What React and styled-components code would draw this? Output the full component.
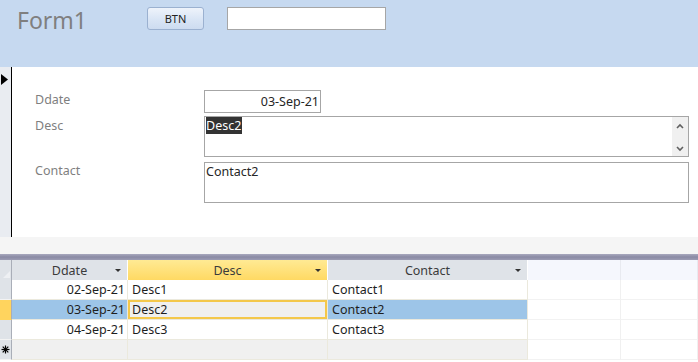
import React from "react";
import styled, { createGlobalStyle } from "styled-components";

const Global = createGlobalStyle`
  html, body { margin: 0; padding: 0; background: #ffffff; }
  body { font-family: "Noto Sans", "Open Sans", sans-serif; overflow: hidden; }
  * { box-sizing: border-box; }
`;

const Page = styled.div`
  width: 698px;
  height: 362px;
  display: flex;
  flex-direction: column;
  overflow: hidden;
`;

const FormHeader = styled.header`
  height: 67px;
  background: #c6d9f0;
  display: flex;
  align-items: flex-start;
  padding: 7px 0 0 17px;
  flex-shrink: 0;
`;

const Title = styled.h1`
  margin: 0;
  width: 130px;
  font-weight: 400;
  font-size: 23px;
  line-height: 27px;
  color: #7f7f7f;
  font-family: "Noto Sans", sans-serif;
`;

const Button = styled.button`
  width: 57px;
  height: 23px;
  border: 1px solid #9bb1d0;
  border-radius: 3px;
  background: linear-gradient(#eef3fb, #d9e5f5 55%, #cddcf0);
  font-family: "Noto Sans", sans-serif;
  font-size: 11px;
  color: #222;
  padding: 0;
  margin-right: 23px;
`;

const HeaderInput = styled.div`
  width: 159px;
  height: 23px;
  background: #fff;
  border: 1px solid #a6a6a6;
`;

const Detail = styled.section`
  height: 170px;
  display: flex;
  flex-shrink: 0;
`;

const FormSelector = styled.div`
  width: 12px;
  background: #e9ecf1;
  border-right: 1px solid #000;
  padding: 1px 0 0 1px;
`;

const FormBody = styled.div`
  flex: 1;
  background: #fff;
  display: grid;
  grid-template-columns: 169px 485px;
  grid-auto-rows: auto;
  row-gap: 3px;
  align-content: start;
  padding: 23px 0 0 23px;
`;

const Label = styled.div`
  font-size: 12.5px;
  line-height: 16px;
  color: #7f7f7f;
  padding-top: ${(p) => p.$top}px;
`;

const Field = styled.div`
  width: ${(p) => p.$w}px;
  height: ${(p) => p.$h}px;
  border: 1px solid #a6a6a6;
  background: #fff;
  font-size: 12.5px;
  line-height: 17px;
  color: #262626;
  padding: 0 1px;
  display: flex;
  justify-content: ${(p) => (p.$right ? "flex-end" : "flex-start")};
  align-items: ${(p) => (p.$right ? "center" : "flex-start")};
  position: relative;
  margin-top: ${(p) => p.$mt || 0}px;
`;

const Selected = styled.span`
  background: #333333;
  color: #fff;
  padding: 0 1px 0 0;
`;

const ScrollBar = styled.div`
  position: absolute;
  right: 0;
  top: 0;
  bottom: 0;
  width: 16px;
  background: #f0f0f0;
  display: flex;
  flex-direction: column;
  justify-content: space-between;
  align-items: center;
  padding: 6px 0 4px;
`;

const FormFooter = styled.div`
  height: 17px;
  background: #f5f5f5;
  flex-shrink: 0;
`;

const Splitter = styled.div`
  height: 6px;
  background: linear-gradient(#a9a9be, #8a8aa4 50%, #9c9cb4);
  flex-shrink: 0;
`;

const Grid = styled.div`
  display: grid;
  grid-template-columns: 12px 116px 200px 200px 93px 77px;
  grid-auto-rows: 20px;
  font-size: 12.5px;
  color: #1e1e1e;
`;

const HeadCell = styled.div`
  background: ${(p) =>
    p.$active
      ? "linear-gradient(#ffea94, #ffd963)"
      : p.$empty
      ? "#f5f7fd"
      : "#dfe3e8"};
  border-right: 1px solid ${(p) => (p.$empty ? "#e8eaf0" : "#ffffff")};
  display: flex;
  align-items: center;
  justify-content: center;
  position: relative;
  color: #3b3b3b;
`;

const Arrow = styled.span`
  position: absolute;
  right: 6px;
  top: 9px;
  width: 0;
  height: 0;
  border-left: 3px solid transparent;
  border-right: 3px solid transparent;
  border-top: 3px solid #333;
`;

const Corner = styled.div`
  background: #dfe3e8;
  border-right: 1px solid #a9aeb8;
  position: relative;
`;

const CornerMark = styled.span`
  position: absolute;
  right: 1px;
  bottom: 2px;
  width: 0;
  height: 0;
  border-left: 7px solid transparent;
  border-bottom: 7px solid #eef0f3;
`;

const RowSel = styled.div`
  background: ${(p) => (p.$current ? "#ffd45e" : "#dfe3e8")};
  border-right: 1px solid #a9aeb8;
  border-bottom: 1px solid ${(p) => (p.$current ? "#ffd45e" : "#f3f3f3")};
  display: flex;
  align-items: center;
  justify-content: center;
`;

const Cell = styled.div`
  background: ${(p) =>
    p.$focus ? "#f0f0f0" : p.$sel ? "#9dc5e8" : p.$new ? "#f0f0f0" : "#ffffff"};
  border-right: 1px solid ${(p) => (p.$empty ? "#f0f0f0" : "#ebe9dd")};
  border-bottom: 1px solid ${(p) => (p.$empty ? "#f2f2f2" : "#ebe9dd")};
  ${(p) => (p.$focus ? "box-shadow: inset 0 0 0 2px #f4c84b;" : "")}
  display: flex;
  align-items: center;
  justify-content: ${(p) => (p.$right ? "flex-end" : "flex-start")};
  padding: 0 ${(p) => (p.$right ? 2 : 4)}px;
  white-space: nowrap;
  overflow: hidden;
`;

const rows = [
  { d: "02-Sep-21", desc: "Desc1", c: "Contact1" },
  { d: "03-Sep-21", desc: "Desc2", c: "Contact2", current: true },
  { d: "04-Sep-21", desc: "Desc3", c: "Contact3" },
];

const Chevron = ({ up }) => (
  <svg width="8" height="6" viewBox="0 0 8 6">
    <path
      d={up ? "M1 5 L4 2 L7 5" : "M1 1 L4 4 L7 1"}
      fill="none"
      stroke="#606060"
      strokeWidth="1.6"
    />
  </svg>
);

const NewRowMark = () => (
  <svg width="9" height="9" viewBox="0 0 9 9">
    <g stroke="#000" strokeWidth="1.2" fill="none">
      <path d="M4.5 0.5 V8.5" />
      <path d="M0.5 4.5 H8.5" />
      <path d="M1.7 1.7 L7.3 7.3" />
      <path d="M7.3 1.7 L1.7 7.3" />
    </g>
  </svg>
);

export default function App() {
  return (
    <Page>
      <Global />
      <FormHeader>
        <Title>Form1</Title>
        <Button>BTN</Button>
        <HeaderInput />
      </FormHeader>
      <Detail>
        <FormSelector>
          <svg width="7" height="11" viewBox="0 0 7 11">
            <path d="M0 0 L7 5.5 L0 11 Z" fill="#000" />
          </svg>
        </FormSelector>
        <FormBody>
          <Label $top={2}>Ddate</Label>
          <Field $w={117} $h={23} $right>
            03-Sep-21
          </Field>
          <Label $top={2}>Desc</Label>
          <Field $w={485} $h={41}>
            <Selected>Desc2</Selected>
            <ScrollBar>
              <Chevron up />
              <Chevron />
            </ScrollBar>
          </Field>
          <Label $top={3}>Contact</Label>
          <Field $w={485} $h={41} $mt={2}>
            Contact2
          </Field>
        </FormBody>
      </Detail>
      <FormFooter />
      <Splitter />
      <Grid>
        <Corner>
          <CornerMark />
        </Corner>
        <HeadCell>
          Ddate
          <Arrow />
        </HeadCell>
        <HeadCell $active>
          Desc
          <Arrow />
        </HeadCell>
        <HeadCell>
          Contact
          <Arrow />
        </HeadCell>
        <HeadCell $empty />
        <HeadCell $empty />
        {rows.map((r) => (
          <React.Fragment key={r.d}>
            <RowSel $current={r.current} />
            <Cell $right $sel={r.current}>
              {r.d}
            </Cell>
            <Cell $focus={r.current}>{r.desc}</Cell>
            <Cell $sel={r.current}>{r.c}</Cell>
            <Cell $empty />
            <Cell $empty />
          </React.Fragment>
        ))}
        <RowSel>
          <NewRowMark />
        </RowSel>
        <Cell $new />
        <Cell $new />
        <Cell $new />
        <Cell $empty />
        <Cell $empty />
      </Grid>
    </Page>
  );
}
